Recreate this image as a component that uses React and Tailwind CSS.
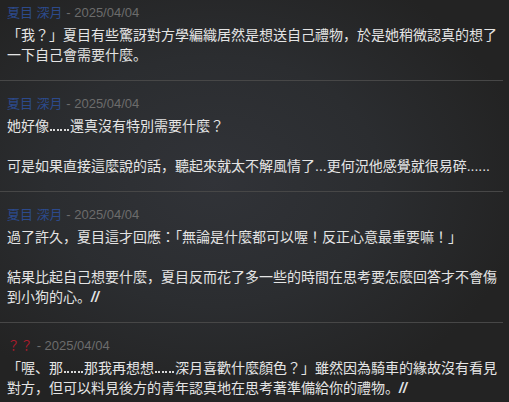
const posts = [
  {
    name: "夏目 深月",
    nameColor: "text-[#2c4a8c]",
    date: "2025/04/04",
    first: true,
    paragraphs: [
      ["「我？」夏目有些驚訝對方學編織居然是想送自己禮物，於是她稍微認真的想了一下自己會需要什麼。"],
    ],
  },
  {
    name: "夏目 深月",
    nameColor: "text-[#2c4a8c]",
    date: "2025/04/04",
    paragraphs: [
      ["她好像……還真沒有特別需要什麼？"],
      ["可是如果直接這麼說的話，聽起來就太不解風情了...更何況他感覺就很易碎......"],
    ],
  },
  {
    name: "夏目 深月",
    nameColor: "text-[#2c4a8c]",
    date: "2025/04/04",
    paragraphs: [
      ["過了許久，夏目這才回應：「無論是什麼都可以喔！反正心意最重要嘛！」"],
      ["結果比起自己想要什麼，夏目反而花了多一些的時間在思考要怎麼回答才不會傷到小狗的心。", true],
    ],
  },
  {
    name: "？？",
    nameColor: "text-[#a81c2c]",
    date: "2025/04/04",
    last: true,
    paragraphs: [
      ["「喔、那……那我再想想……深月喜歡什麼顏色？」雖然因為騎車的緣故沒有看見對方，但可以料見後方的青年認真地在思考著準備給你的禮物。", true],
    ],
  },
];

// "……" drawn as six baseline dots
function Dots() {
  return (
    <span className="inline-flex w-[21px] items-end justify-between px-[1px] pb-[4px] align-baseline">
      {[0, 1, 2, 3, 4, 5].map((i) => (
        <span key={i} className="h-[2px] w-[2px] bg-[#d8d8d8]" />
      ))}
    </span>
  );
}

function Body({ text }) {
  const parts = text.split("……");
  return parts.map((part, i) => (
    <span key={i}>
      {part}
      {i < parts.length - 1 && <Dots />}
    </span>
  ));
}

function Post({ post }) {
  return (
    <div
      className={`mr-[6px] pl-[7px] ${post.first ? "pt-[3px]" : "pt-[13px]"} ${
        post.last ? "" : "border-b border-[#474747] pb-[15px]"
      }`}
    >
      <div className="text-[13px] leading-[20px]">
        <span className={post.nameColor}>{post.name}</span>
        <span className="text-[#6c6c6c]"> - {post.date}</span>
      </div>
      <div className="-mr-[6px] mt-[2px] flex flex-col gap-[20px] text-[14px] leading-[20px] text-[#e4e4e4]">
        {post.paragraphs.map(([text, end], i) => (
          <p key={i}>
            <Body text={text} />
            {end && <span className="font-bold italic">//</span>}
          </p>
        ))}
      </div>
    </div>
  );
}

export default function App() {
  return (
    <div
      className="h-[402px] w-[509px] overflow-hidden bg-[radial-gradient(ellipse_at_42%_45%,#313338_0%,#2b2d30_40%,#232323_75%)]"
      style={{ fontFamily: '"Liberation Sans", "Noto Sans CJK JP", sans-serif' }}
    >
      {posts.map((post, i) => (
        <Post key={i} post={post} />
      ))}
    </div>
  );
}
